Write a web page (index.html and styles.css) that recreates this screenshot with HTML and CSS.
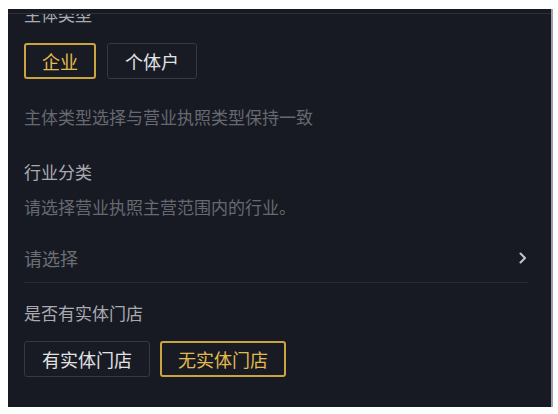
FILE: index.html
```html
<!DOCTYPE html>
<html lang="zh-CN">
<head>
<meta charset="utf-8">
<link rel="stylesheet" href="styles.css">
</head>
<body>
<div class="page">
  <div class="panel">
    <div class="topbar"></div>
    <div class="content">
      <div class="label title">主体类型</div>
      <div class="options">
        <div class="opt active">企业</div>
        <div class="opt">个体户</div>
      </div>
      <div class="helper h1">主体类型选择与营业执照类型保持一致</div>

      <div class="label l2">行业分类</div>
      <div class="helper h2">请选择营业执照主营范围内的行业。</div>
      <div class="select">
        <span class="placeholder">请选择</span>
        <svg class="chev" width="8" height="12" viewBox="0 0 8 12"><polyline points="1.5,1.5 6,6 1.5,10.5" fill="none" stroke="#c4c6ca" stroke-width="2" stroke-linecap="round" stroke-linejoin="round"/></svg>
      </div>

      <div class="label l3">是否有实体门店</div>
      <div class="options o2">
        <div class="opt">有实体门店</div>
        <div class="opt active">无实体门店</div>
      </div>
    </div>
  </div>
</div>
</body>
</html>
```
FILE: styles.css
```css
* { box-sizing: border-box; }
html, body { margin: 0; padding: 0; background: #ffffff; }
body { font-family: "Noto Sans CJK SC", "Noto Sans", sans-serif; }
.page { padding: 9px 0 7px 8px; width: 558px; height: 414px; }
.panel {
  width: 545px;
  height: 398px;
  background: #171a23;
  border-right: 2px solid #9fa1a5;
  display: flex;
  flex-direction: column;
  overflow: hidden;
}
.topbar { height: 5px; flex: none; border-bottom: 1px solid #2c2f38; position: relative; z-index: 1; background: #171a23; }
.content { flex: 1; overflow: hidden; padding-left: 16px; padding-right: 23px; }
.label { font-size: 17px; line-height: 24px; color: #a9abb0; }
.title { margin-top: -12px; }
.options { display: flex; gap: 11px; margin-top: 17px; }
.opt {
  height: 36px;
  line-height: 34px;
  padding: 0 17px;
  border: 1px solid #363944;
  border-radius: 3px;
  font-size: 18px;
  color: #e2e2e4;
  background: #181b24;
}
.opt.active {
  border: 2px solid #c9a43f;
  line-height: 32px;
  padding: 0 16px;
  color: #e3ba4c;
}
.helper { font-size: 17px; line-height: 22px; color: #66696f; }
.h1 { margin-top: 27px; }
.l2 { margin-top: 32px; }
.h2 { margin-top: 12px; }
.select {
  margin-top: 27px;
  padding-bottom: 11px;
  border-bottom: 1px solid #272a33;
  display: flex;
  align-items: center;
  justify-content: space-between;
  padding-right: 1px;
}
.placeholder { font-size: 18px; line-height: 26px; color: #6c6f76; }
.chev { display: block; }
.l3 { margin-top: 18px; }
.o2 { margin-top: 16px; gap: 10px; }
```
